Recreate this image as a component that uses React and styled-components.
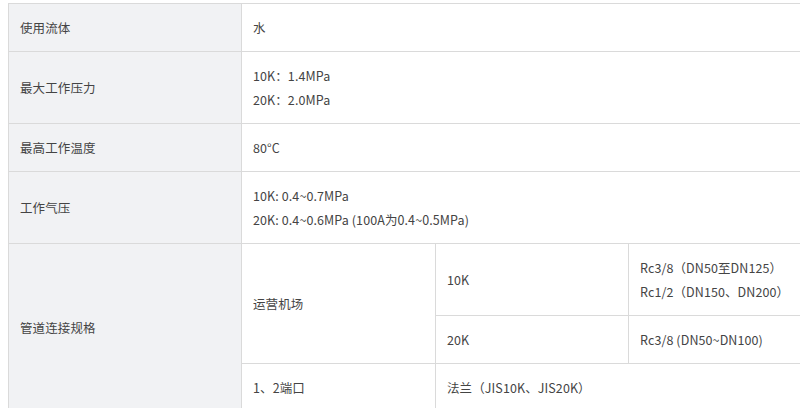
import React from 'react';
import styled, { createGlobalStyle } from 'styled-components';

const GlobalStyle = createGlobalStyle`
  html, body {
    margin: 0;
    padding: 0;
    background: #fff;
  }
  body {
    font-family: "Noto Sans CJK SC", "Noto Sans", sans-serif;
    overflow: hidden;
  }
`;

const Page = styled.div`
  padding: 3px 0 0 8px;
  width: 900px;
`;

const SpecTable = styled.div`
  display: grid;
  grid-template-columns: 232px 193px 192px 193px;
  gap: 1px;
  padding: 1px;
  width: max-content;
  background: #dadada;
  color: #444;
  font-size: 12.5px;
  line-height: 24px;
  letter-spacing: 0.1px;
`;

const Cell = styled.div`
  display: flex;
  flex-direction: column;
  justify-content: center;
  padding: 11.5px 11px;
  background: ${p => (p.$head ? '#f1f2f4' : '#fff')};
  grid-column: ${p => p.$col || 'auto'};
  grid-row: ${p => p.$row || 'auto'};
  white-space: nowrap;
`;

const rows = [
  { label: '使用流体', lines: ['水'] },
  { label: '最大工作压力', lines: ['10K：1.4MPa', '20K：2.0MPa'] },
  { label: '最高工作温度', lines: ['80°C'] },
  { label: '工作气压', lines: ['10K: 0.4~0.7MPa', '20K: 0.4~0.6MPa (100A为0.4~0.5MPa)'] },
];

export default function App() {
  return (
    <Page>
      <GlobalStyle />
      <SpecTable>
        {rows.map(r => (
          <React.Fragment key={r.label}>
            <Cell $head>{r.label}</Cell>
            <Cell $col="2 / 5">
              {r.lines.map(l => <span key={l}>{l}</span>)}
            </Cell>
          </React.Fragment>
        ))}

        <Cell $head $row="5 / 8">管道连接规格</Cell>
        <Cell $col="2" $row="5 / 7">运营机场</Cell>
        <Cell $col="3" $row="5">10K</Cell>
        <Cell $col="4" $row="5">
          <span>Rc3/8（DN50至DN125）</span>
          <span>Rc1/2（DN150、DN200）</span>
        </Cell>
        <Cell $col="3" $row="6">20K</Cell>
        <Cell $col="4" $row="6">Rc3/8 (DN50~DN100)</Cell>
        <Cell $col="2" $row="7">1、2端口</Cell>
        <Cell $col="3 / 5" $row="7">法兰（JIS10K、JIS20K）</Cell>
      </SpecTable>
    </Page>
  );
}
